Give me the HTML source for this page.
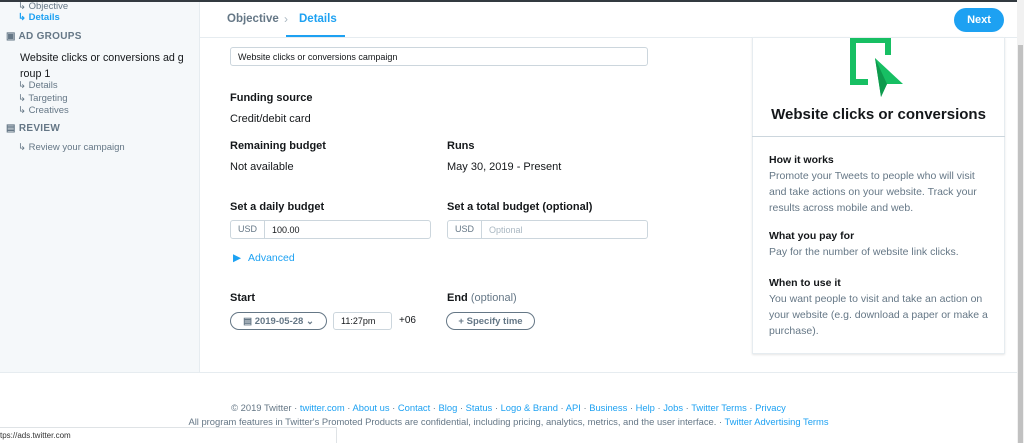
<!DOCTYPE html>
<html><head><meta charset="utf-8"><style>
*{margin:0;padding:0;box-sizing:border-box}
body{width:1024px;height:443px;overflow:hidden;background:#fff;font-family:"Liberation Sans",sans-serif;color:#14171a;position:relative}
.a{position:absolute;white-space:nowrap;font-family:"Liberation Sans",sans-serif}
.sb{left:0;top:0;width:200px;height:372px;background:#f5f8fa;border-right:1px solid #e6ecf0}
.sm{font-size:9.5px;color:#657786}
.hd{font-size:10px;font-weight:bold;color:#657786;letter-spacing:.3px}
.lb{font-size:11px;font-weight:bold;color:#14171a}
.tx{font-size:11px;color:#14171a}
.inp{border:1px solid #ccd6dd;border-radius:3px;height:19px;font-size:9px;display:flex;align-items:center}
.pill{border:1px solid #657786;border-radius:10px;height:18px;font-size:9.5px;font-weight:bold;color:#657786;display:flex;align-items:center;justify-content:center}
.rp{font-size:10.5px;color:#657786;line-height:16px;white-space:normal;width:222px}
.rp b{color:#14171a;display:block}
.ft{font-size:9.4px;color:#657786;width:1017px;text-align:center;left:0}
.ft span{color:#1da1f2}
</style></head><body>
<div class="a sb"></div>
<div class="a" style="left:0;top:0;width:1024px;height:2px;background:#333a40"></div>
<div class="a sm" style="left:18px;top:1px">↳ Objective</div>
<div class="a sm" style="left:18px;top:12px;color:#1da1f2;font-weight:bold">↳ Details</div>
<div class="a hd" style="left:6px;top:31px">▣ AD GROUPS</div>
<div class="a" style="left:20px;top:50px;font-size:10.7px;color:#14171a;line-height:16px">Website clicks or conversions ad g<br>roup 1</div>
<div class="a sm" style="left:18px;top:80px;line-height:12.5px">↳ Details<br>↳ Targeting<br>↳ Creatives</div>
<div class="a hd" style="left:6px;top:123px">▤ REVIEW</div>
<div class="a sm" style="left:18px;top:142px">↳ Review your campaign</div>

<div class="a" style="left:200px;top:37px;width:817px;height:1px;background:#e6ecf0"></div>
<div class="a" style="left:227px;top:13px;font-size:11.5px;font-weight:bold;color:#657786">Objective</div>
<div class="a" style="left:284px;top:12px;font-size:12px;color:#aab8c2">›</div>
<div class="a" style="left:299px;top:13px;font-size:11.5px;font-weight:bold;color:#1da1f2">Details</div>
<div class="a" style="left:286px;top:35px;width:59px;height:2px;background:#1da1f2"></div>
<div class="a" style="left:954px;top:8px;width:50px;height:24px;border-radius:12px;background:#1da1f2;color:#fff;font-size:11px;font-weight:bold;text-align:center;line-height:24px">Next</div>

<div class="a inp" style="left:230px;top:47px;width:418px;padding-left:7px;height:19px">Website clicks or conversions campaign</div>
<div class="a lb" style="left:230px;top:92px">Funding source</div>
<div class="a tx" style="left:230px;top:113px">Credit/debit card</div>
<div class="a lb" style="left:230px;top:140px">Remaining budget</div>
<div class="a tx" style="left:230px;top:161px">Not available</div>
<div class="a lb" style="left:447px;top:140px">Runs</div>
<div class="a tx" style="left:447px;top:161px">May 30, 2019 - Present</div>
<div class="a lb" style="left:230px;top:201px">Set a daily budget</div>
<div class="a lb" style="left:447px;top:201px">Set a total budget (optional)</div>
<div class="a inp" style="left:230px;top:220px;width:201px"><span style="padding:0 7px;border-right:1px solid #ccd6dd;line-height:17px;color:#657786">USD</span><span style="padding-left:7px">100.00</span></div>
<div class="a inp" style="left:447px;top:220px;width:201px"><span style="padding:0 7px;border-right:1px solid #ccd6dd;line-height:17px;color:#657786">USD</span><span style="padding-left:7px;color:#aab8c2">Optional</span></div>
<div class="a" style="left:233px;top:252px;font-size:10.5px;color:#1da1f2">▶ <span style="margin-left:4px">Advanced</span></div>
<div class="a lb" style="left:230px;top:292px">Start</div>
<div class="a" style="left:447px;top:292px;font-size:11px"><b>End</b> <span style="color:#657786">(optional)</span></div>
<div class="a pill" style="left:230px;top:312px;width:97px">▤ 2019-05-28 ⌄</div>
<div class="a inp" style="left:333px;top:312px;width:59px;padding-left:7px;height:18px">11:27pm</div>
<div class="a" style="left:399px;top:315px;font-size:10px;color:#14171a">+06</div>
<div class="a pill" style="left:446px;top:312px;width:89px">+ Specify time</div>

<div class="a" style="left:752px;top:37px;width:253px;height:317px;border:1px solid #e6ecf0;border-top:none;box-shadow:0 1px 2px rgba(0,0,0,.1)"></div>
<div class="a" style="left:752px;top:136px;width:253px;height:1px;background:#ccd6dd"></div>
<svg class="a" style="left:850px;top:38px" width="56" height="60" viewBox="0 0 56 60">
<path d="M3 2H38V17" fill="none" stroke="#17bf63" stroke-width="6"/><path d="M3 0V44H18" fill="none" stroke="#17bf63" stroke-width="6"/>
<path d="M25 20L53 46L37 46L31 59Z" fill="#17bf63"/><path d="M25 20L31 59L37 46Z" fill="#0e9a4d"/></svg>
<div class="a" style="left:752px;top:106px;width:253px;text-align:center;font-size:15px;font-weight:bold;color:#14171a">Website clicks or conversions</div>
<div class="a rp" style="left:769px;top:152px"><b>How it works</b>Promote your Tweets to people who will visit and take actions on your website. Track your results across mobile and web.</div>
<div class="a rp" style="left:769px;top:228px"><b>What you pay for</b>Pay for the number of website link clicks.</div>
<div class="a rp" style="left:769px;top:275px"><b>When to use it</b>You want people to visit and take an action on your website (e.g. download a paper or make a purchase).</div>

<div class="a" style="left:0;top:372px;width:1017px;height:1px;background:#e6ecf0"></div>
<div class="a" style="left:1017px;top:0;width:7px;height:443px;background:#f1f1f1"></div>
<div class="a" style="left:1018px;top:45px;width:5px;height:398px;background:#c1c1c1"></div>
<div class="a ft" style="top:402px">© 2019 Twitter · <span>twitter.com</span> · <span>About us</span> · <span>Contact</span> · <span>Blog</span> · <span>Status</span> · <span>Logo &amp; Brand</span> · <span>API</span> · <span>Business</span> · <span>Help</span> · <span>Jobs</span> · <span>Twitter Terms</span> · <span>Privacy</span></div>
<div class="a ft" style="top:416px">All program features in Twitter's Promoted Products are confidential, including pricing, analytics, metrics, and the user interface. · <span>Twitter Advertising Terms</span></div>
<div class="a" style="left:0;top:427px;width:337px;height:16px;background:#fff;border:1px solid #dfe3e6;border-left:none;border-bottom:none;font-size:8px;color:#333;padding:3px 0 0 0">tps://ads.twitter.com</div>
</body></html>
